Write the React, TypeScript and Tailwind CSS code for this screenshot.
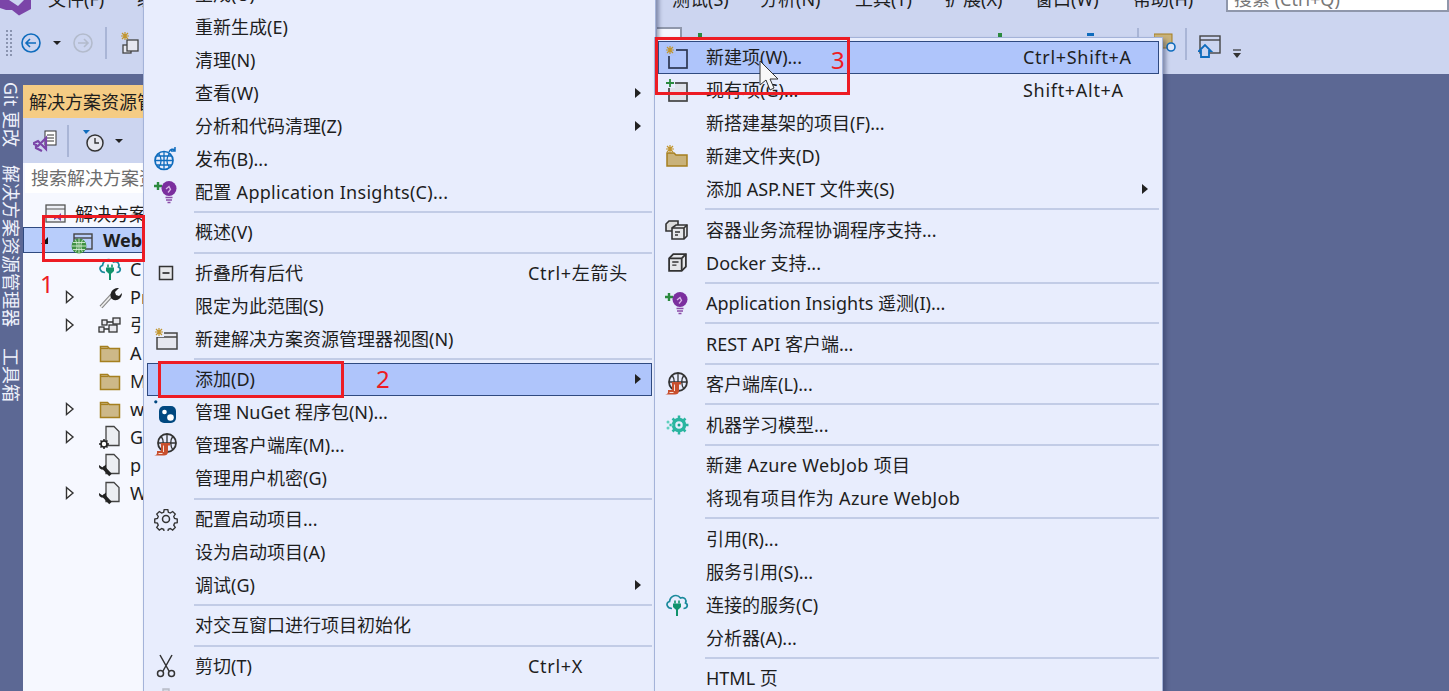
import React from "react";

const Folder = () => (
  <svg width="22" height="20" viewBox="0 0 22 20">
    <path d="M1.500 3.500h7l2 2h10v13h-19z" fill="#cdb888" stroke="#a57f1f" strokeWidth="1.500" />
    <path d="M1.500 5.500h8" stroke="#a57f1f" strokeWidth="1.200" />
  </svg>
);
const Tri = () => (
  <svg width="10" height="14" viewBox="0 0 10 14"><path d="M1.500 1.500 8 7l-6.500 5.500z" fill="#fff" stroke="#333" strokeWidth="1.400" /></svg>
);
const Spark = ({ x = 5, y = 5 }: { x?: number; y?: number }) => (
  <g stroke="#c2962e" strokeWidth="1.200">
    <path d={`M${x - 4} ${y}h8M${x} ${y - 4}v8M${x - 3} ${y - 3}l6 6M${x + 3} ${y - 3}l-6 6`} />
  </g>
);
const Doc = ({ badge }: { badge: "gear" | "wrench" }) => (
  <svg width="22" height="24" viewBox="0 0 22 24">
    <path d="M7 1.500h8l5 5v14H7z" fill="#eceef2" stroke="#444" strokeWidth="1.300" />
    {badge === "gear" ? (
      <g>
        <path d="M5 14v10M0 19h10M1.500 15.500l7 7M8.500 15.500l-7 7" stroke="#222" strokeWidth="1.500" />
        <circle cx="5" cy="19" r="3" fill="#fff" stroke="#222" strokeWidth="1.600" />
      </g>
    ) : (
      <g>
        <path d="M4 14l7.500 8" stroke="#222" strokeWidth="3.500" />
        <path d="M7 11.500 3.500 14.500 0 12c-.5 3 1.500 5 5 4.500L7 15z" fill="#222" />
      </g>
    )}
  </svg>
);
const CloudPlug = ({ size = 24 }: { size?: number }) => (
  <svg width={size} height={size} viewBox="0 0 24 24">
    <path d="M7 15.500C2 15.500 0 10 4.500 8.500 5.500 2.500 12 .5 15.500 5c4-1.500 6.500 2 5 5 3 1.500 2 5.500-2 5.500" fill="none" stroke="#1a8a9c" strokeWidth="1.700" />
    <path d="M10 7.500v3M14 7.500v3" stroke="#11936b" strokeWidth="1.600" />
    <path d="M8 10.500h8v3.500l-2.500 2.500h-3L8 14z" fill="#11936b" />
    <path d="M12 16v7" stroke="#11936b" strokeWidth="2" />
  </svg>
);
const GlobeScript = () => (
  <svg width="24" height="24" viewBox="0 0 24 24">
    <circle cx="13" cy="10" r="9" fill="none" stroke="#333" strokeWidth="1.800" />
    <path d="M4 10h18M13 1v18M7 3c3 4 3 10 0 14M19 3c-3 4-3 10 0 14" fill="none" stroke="#333" strokeWidth="1.300" />
    <path d="M7 10h9v2.500h-2v6c0 3-2 4-4 4H0c2 0 3-1 3-2.500V18h4v-5c0-1.500-.5-3 0-3z" fill="#c8502e" />
    <path d="M9.500 12.500v6.500M4.500 20.500h4" stroke="#f5e0d8" strokeWidth="1" />
  </svg>
);
const Bulb = () => (
  <svg width="24" height="24" viewBox="0 0 24 24">
    <path d="M0 6h8M4 2v8" stroke="#2b8a3e" strokeWidth="2.400" />
    <circle cx="15" cy="8.500" r="7.500" fill="#7b2f9e" />
    <path d="M12 9l3-2.500 1.500 3-2.500 3" fill="none" stroke="#d9b8e8" strokeWidth="1.300" />
    <path d="M11.500 17.500h7M12 20h6M13.500 22.500h3" stroke="#8a4ba8" strokeWidth="1.600" />
  </svg>
);
const Box = () => (
  <svg width="21" height="21" viewBox="0 0 20 20">
    <path d="M2 6l4-4h12v12l-4 4H2z" fill="#e6e7ea" stroke="#333" strokeWidth="1.700" />
    <path d="M2 6h12v12M14 6l4-4" fill="none" stroke="#333" strokeWidth="1.700" />
    <path d="M5 9.500h6M5 12.500h4" stroke="#333" strokeWidth="1.400" />
  </svg>
);
const Boxes = () => (
  <svg width="24" height="22" viewBox="0 0 24 22">
    <path d="M1 5l3-3h9v10H1z" fill="#ddd" stroke="#333" strokeWidth="1.600" />
    <path d="M7 9l4-3h11v11l-3 3H7z" fill="#e6e7ea" stroke="#333" strokeWidth="1.600" />
    <path d="M7 9h12v11M19 9l3-3M10 13h5M10 16h3" fill="none" stroke="#333" strokeWidth="1.600" />
  </svg>
);
const Ml = () => (
  <svg width="24" height="24" viewBox="0 0 24 24">
    <circle cx="14" cy="12" r="5.500" fill="none" stroke="#2ab5a0" strokeWidth="3.500" />
    <path d="M14 2.500v3M14 18.500v3M4.500 12h3M20.500 12h3M7.500 5.500l2 2M20.500 5.500l-2 2M7.500 18.500l2-2M20.500 18.500l-2-2" stroke="#2ab5a0" strokeWidth="2.500" />
    <circle cx="14" cy="12" r="1.500" fill="#14a58e" />
    <circle cx="3" cy="9" r="1.500" fill="#5fd0bd" /><circle cx="3" cy="15" r="1.500" fill="#5fd0bd" /><circle cx="7" cy="12" r="1.300" fill="#5fd0bd" />
  </svg>
);
const Scissors = () => (
  <svg width="20" height="24" viewBox="0 0 20 24" fill="none" stroke="#333" strokeWidth="1.500">
    <path d="M4 1l9 16M16 1L7 17" /><circle cx="4.500" cy="19.500" r="3" /><circle cx="15.500" cy="19.500" r="3" />
  </svg>
);
const Gear = () => (
  <svg width="24" height="24" viewBox="0 0 24 24" fill="none" stroke="#333" strokeWidth="1.500">
    <path d="M10 1.500h4l.6 3 2.200.9 2.600-1.700 2.900 2.900-1.700 2.600.9 2.200 3 .6v4l-3 .6-.9 2.200 1.700 2.600-2.900 2.900-2.600-1.700-2.200.9-.6 3h-4l-.6-3-2.200-.9-2.600 1.700-2.900-2.900 1.700-2.600-.9-2.200-3-.6v-4l3-.6.9-2.200-1.700-2.600 2.900-2.900 2.600 1.700 2.200-.9z" transform="translate(1.200 1.200) scale(.9)" />
    <circle cx="12" cy="12" r="3.500" />
  </svg>
);
const Sq = () => (
  <svg width="16" height="16" viewBox="0 0 16 16" fill="none"><rect x="1.500" y="1.500" width="13" height="13" fill="#e6e7ea" stroke="#333" strokeWidth="1.500" /><path d="M4.500 8h7" stroke="#222" strokeWidth="1.600" /></svg>
);
const GlobeUp = () => (
  <svg width="24" height="24" viewBox="0 0 24 24" fill="none" stroke="#0f6cbd" strokeWidth="1.700">
    <circle cx="10" cy="13.500" r="9" /><path d="M1 13.500h18M10 4.500v18M4.500 6.500c3.500 4 3.500 10 0 14M15.500 6.500c-3.500 4-3.500 10 0 14M2.500 9h15M2.500 18h15" strokeWidth="1.300" />
    <path d="M15 5c1.500-3 4-3.500 6-2M21 0v4h-4" strokeWidth="1.500" />
  </svg>
);
const NuGet = () => (
  <svg width="24" height="24" viewBox="0 0 24 24">
    <rect x="5" y="6" width="17" height="17" rx="5" fill="#004880" />
    <circle cx="1.800" cy="1.800" r="1.600" fill="#004880" />
    <circle cx="10.500" cy="12" r="2.300" fill="#fff" /><circle cx="16.500" cy="17.500" r="3.300" fill="#fff" />
  </svg>
);
const NewSol = () => (
  <svg width="24" height="24" viewBox="0 0 24 24">
    <rect x="3" y="6" width="20" height="16" fill="#e6e7ef" stroke="#444" strokeWidth="1.500" /><path d="M3 10h20" stroke="#444" strokeWidth="1.500" />
    <rect x="0" y="0" width="10" height="10" fill="#e8edfd" />
    <Spark x={5} y={5} />
  </svg>
);
const NewItem = () => (
  <svg width="24" height="24" viewBox="0 0 24 24">
    <rect x="4" y="5" width="18" height="18" fill="none" stroke="#2c3550" strokeWidth="1.700" />
    <rect x="0" y="0" width="11" height="11" fill="#aec3f8" />
    <Spark x={5} y={5} />
  </svg>
);
const AddItem = () => (
  <svg width="24" height="24" viewBox="0 0 24 24">
    <rect x="4" y="5" width="18" height="18" fill="#dfe2ea" stroke="#444" strokeWidth="1.700" />
    <rect x="0" y="0" width="10" height="10" fill="#e8edfd" />
    <path d="M1 5h8M5 1v8" stroke="#2b8a3e" strokeWidth="1.800" />
  </svg>
);
const NewFolder = () => (
  <svg width="24" height="24" viewBox="0 0 24 24">
    <path d="M2 9h7l2 2h11v11H2z" fill="#c9b27a" stroke="#a57f1f" strokeWidth="1.500" />
    <Spark x={5} y={5} />
  </svg>
);
const Web = () => (
  <svg width="16" height="16" viewBox="0 0 16 16" fill="none">
    <circle cx="8" cy="8" r="7.500" fill="#3f9142" />
    <path d="M.5 8h15M8 .5v15M4.500 2c2 3.500 2 8.500 0 12M11.500 2c-2 3.500-2 8.500 0 12M2 4.500h12M2 11.500h12" stroke="#d4ecd4" strokeWidth=".9" />
  </svg>
);
const Paste = () => (
  <svg width="20" height="24" viewBox="0 0 20 24"><path d="M4 6h12v16H4z M7 6V2h6v4" fill="#d5d8e2" stroke="#b8bcc8" strokeWidth="1.400" /></svg>
);

type Row = { t?: string; sep?: boolean; k?: string; a?: boolean; i?: React.ReactNode; hl?: boolean; wide?: boolean };

const menu1: Row[] = [
  { t: "生成(U)" }, { t: "重新生成(E)" }, { t: "清理(N)" }, { t: "查看(W)", a: true }, { t: "分析和代码清理(Z)", a: true },
  { t: "发布(B)...", i: <GlobeUp /> }, { t: "配置 Application Insights(C)...", i: <Bulb />, wide: true }, { sep: true },
  { t: "概述(V)" }, { sep: true },
  { t: "折叠所有后代", k: "Ctrl+左箭头", i: <Sq /> }, { t: "限定为此范围(S)" }, { t: "新建解决方案资源管理器视图(N)", i: <NewSol /> }, { sep: true },
  { t: "添加(D)", a: true, hl: true }, { t: "管理 NuGet 程序包(N)...", i: <NuGet /> }, { t: "管理客户端库(M)...", i: <GlobeScript /> }, { t: "管理用户机密(G)" }, { sep: true },
  { t: "配置启动项目...", i: <Gear /> }, { t: "设为启动项目(A)" }, { t: "调试(G)", a: true }, { sep: true },
  { t: "对交互窗口进行项目初始化" }, { sep: true },
  { t: "剪切(T)", k: "Ctrl+X", i: <Scissors /> }, { i: <Paste /> },
];
const menu2: Row[] = [
  { t: "新建项(W)...", k: "Ctrl+Shift+A", i: <NewItem />, hl: true }, { t: "现有项(G)...", k: "Shift+Alt+A", i: <AddItem /> }, { t: "新搭建基架的项目(F)..." },
  { t: "新建文件夹(D)", i: <NewFolder /> }, { t: "添加 ASP.NET 文件夹(S)", a: true }, { sep: true },
  { t: "容器业务流程协调程序支持...", i: <Boxes /> }, { t: "Docker 支持...", i: <Box /> }, { sep: true },
  { t: "Application Insights 遥测(I)...", i: <Bulb /> }, { sep: true },
  { t: "REST API 客户端..." }, { sep: true },
  { t: "客户端库(L)...", i: <GlobeScript /> }, { sep: true },
  { t: "机器学习模型...", i: <Ml /> }, { sep: true },
  { t: "新建 Azure WebJob 项目", wide: true }, { t: "将现有项目作为 Azure WebJob", wide: true }, { sep: true },
  { t: "引用(R)..." }, { t: "服务引用(S)..." }, { t: "连接的服务(C)", i: <CloudPlug /> }, { t: "分析器(A)..." }, { sep: true },
  { t: "HTML 页" },
];

function Menu({ rows, cls, keyCol }: { rows: Row[]; cls: string; keyCol: string }) {
  return (
    <div className={`absolute z-10 bg-[#e8edfd] border border-[#a4b3d9] px-[3px] py-[3px] shadow-[3px_3px_4px_rgba(40,50,90,0.45)] ${cls}`}>
      {rows.map((r, n) =>
        r.sep ? (
          <div key={n} className="h-[7.500px] flex items-center pl-[47px]"><div className="h-[2px] w-full bg-[#c2cce6]" /></div>
        ) : (
          <div key={n} className={`relative h-[33px] flex items-center border ${r.hl ? "bg-[#afc5fb] border-[#2f4a80]" : "border-transparent"}`}>
            <div className="w-[47px] shrink-0 flex items-center">
              <div className="w-[36px] flex justify-center items-center">{r.i}</div>
            </div>
            <div className={`flex-1 whitespace-nowrap ${r.wide ? "tracking-[0.3px]" : ""}`}>{r.t}</div>
            {r.k && <div className={`absolute whitespace-nowrap tracking-[0.7px] ${keyCol}`}>{r.k}</div>}
            {r.a && <div className="absolute right-[10px] w-0 h-0 border-y-[5px] border-y-transparent border-l-[6px] border-l-[#222]" />}
          </div>
        )
      )}
    </div>
  );
}

const tree: { t: string; tri?: boolean; i: React.ReactNode }[] = [
  { t: "C", i: <CloudPlug /> },
  { t: "Pr", tri: true, i: <svg width="24" height="24" viewBox="0 0 24 24"><path d="M3 22 14 10" stroke="#888" strokeWidth="4" /><path d="M3 22 14 10" stroke="#eee" strokeWidth="1.800" /><path d="M13 13c-2-5 2-11 8-10l-4 4 1 3 3 1 3-3c0 6-6 9-10 6z" fill="#222" /></svg> },
  { t: "引", tri: true, i: <svg width="24" height="16" viewBox="0 0 24 16" fill="#e9e9ee" stroke="#333" strokeWidth="1.300"><rect x="4" y="3" width="5" height="5" /><rect x="15" y="1" width="7" height="6" /><rect x="1" y="10" width="5" height="5" /><rect x="11" y="8" width="8" height="7" /><path d="M6 12h5M9 5h6" /></svg> },
  { t: "A", i: <Folder /> },
  { t: "M", i: <Folder /> },
  { t: "w", tri: true, i: <Folder /> },
  { t: "G", tri: true, i: <Doc badge="gear" /> },
  { t: "p", i: <Doc badge="wrench" /> },
  { t: "W", tri: true, i: <Doc badge="wrench" /> },
];

export default function App() {
  return (
    <div className="relative w-[1449px] h-[691px] overflow-hidden bg-[#5c6894] text-[18px] leading-[24px] text-[#1e1e1e] font-['Noto_Sans','Noto_Sans_CJK_SC',sans-serif]">
      <div className="h-[74px] bg-[#ccd5f0]">
        <div className="h-[25px] relative overflow-hidden">
          <svg width="31" height="16" viewBox="0 0 31 16" className="absolute left-0 top-0"><path d="M0 0h9l9 6 6-6h7v9l-12 6.500L12 10l-6 0-6-2z" fill="#7b45a8" /></svg>
          <div className="flex items-start -mt-[13px] ml-[48px] whitespace-nowrap">
            <span className="w-[89px] shrink-0">文件(F)</span>
            <span className="w-[535px] shrink-0">编辑(E)</span>
            <span className="w-[88px] shrink-0">测试(S)</span>
            <span className="w-[95px] shrink-0">分析(N)</span>
            <span className="w-[90px] shrink-0">工具(T)</span>
            <span className="w-[90px] shrink-0">扩展(X)</span>
            <span className="w-[98px] shrink-0">窗口(W)</span>
            <span className="w-[93px] shrink-0">帮助(H)</span>
            <span className="w-[223px] shrink-0 h-[25px] bg-white border-[2px] border-[#8f97ab] pl-[6px] text-[#777] leading-[20px]">搜索 (Ctrl+Q)</span>
          </div>
        </div>
        <div className="h-[36px] flex items-center pl-[5px]">
          <div className="w-[9px] h-[28px] bg-[radial-gradient(#8a94b0_1px,transparent_1.500px)] bg-[length:4px_4px]" />
          <svg className="ml-[7px]" width="20" height="20" viewBox="0 0 20 20" fill="none" stroke="#0f6cbd" strokeWidth="1.600"><circle cx="10" cy="10" r="9" /><path d="M15 10H5M9 6l-4 4 4 4" /></svg>
          <div className="ml-[12px] w-0 h-0 border-x-[4px] border-x-transparent border-t-[4px] border-t-[#222]" />
          <svg className="ml-[12px]" width="20" height="20" viewBox="0 0 20 20" fill="none" stroke="#b3bbcc" strokeWidth="1.600"><circle cx="10" cy="10" r="9" /><path d="M5 10h10M11 6l4 4-4 4" /></svg>
          <div className="ml-[12px] w-[2px] h-[32px] bg-[#a9b5d6]" />
          <svg className="ml-[13px]" width="20" height="24" viewBox="0 0 20 24" fill="#e6e7ef" stroke="#444" strokeWidth="1.300"><rect x="3" y="14" width="8" height="8" /><rect x="7" y="9" width="11" height="11" /><Spark x={5} y={5} /></svg>
          <div className="ml-auto flex items-center mr-[273px]">
            <svg width="22" height="24" viewBox="0 0 22 24"><rect x="0" y="3" width="18" height="14" fill="#c9b27a" stroke="#a57f1f" /><circle cx="17" cy="16" r="4" fill="#e0e8fa" stroke="#0f6cbd" strokeWidth="1.600" /></svg>
          </div>
        </div>
      </div>
      <div className="absolute left-[1185px] top-[28px] w-[2px] h-[32px] bg-[#a9b5d6]" />
      <svg className="absolute left-[1198px] top-[34px]" width="24" height="24" viewBox="0 0 24 24"><rect x="2" y="2" width="20" height="17" fill="none" stroke="#444" strokeWidth="1.400" /><path d="M2 6h20" stroke="#444" strokeWidth="1.400" /><path d="M1 17l6-6 6 6h-2v6H3v-6z" fill="#ccd5f0" stroke="#0f6cbd" strokeWidth="1.800" /></svg>
      <svg className="absolute left-[1232px] top-[49px]" width="10" height="10" viewBox="0 0 10 10"><path d="M1 1h8" stroke="#333" strokeWidth="1.200" /><path d="M1 4h8L5 9z" fill="#333" /></svg>
      <div className="absolute left-[657px] top-[27px] w-[25px] h-[12px] bg-[#f4f6fe] border-t-2 border-r-2 border-[#8f97ab]" />
      <div className="absolute left-[698px] top-[33px] w-[4px] h-[4px] bg-[#2b8a3e]" />
      <div className="absolute left-[998px] top-[33px] w-[4px] h-[4px] bg-[#2b8a3e]" />
      <div className="absolute left-[1087px] top-[33px] w-[7px] h-[3px] bg-[#0f6cbd]" />
      <div className="absolute left-[1137px] top-[28px] w-[2px] h-[10px] bg-[#a9b5d6]" />

      <div className="flex h-[617px]">
        <div className="w-[23px] relative text-[#eef1fb] text-[18px]">
          <div className="absolute left-0 top-[8px] w-[23px] [writing-mode:vertical-rl] [text-orientation:sideways] whitespace-nowrap">Git 更改</div>
          <div className="absolute left-0 top-[91px] w-[23px] [writing-mode:vertical-rl] [text-orientation:sideways] whitespace-nowrap">解决方案资源管理器</div>
          <div className="absolute left-0 top-[274px] w-[23px] [writing-mode:vertical-rl] [text-orientation:sideways] whitespace-nowrap">工具箱</div>
        </div>
        <div className="w-[122px] mt-[11px] flex flex-col overflow-hidden bg-[#f6f8ff]">
          <div className="h-[33px] shrink-0 bg-[#f5cc84] flex items-center pl-[6px] whitespace-nowrap">解决方案资源管理器</div>
          <div className="h-[45px] shrink-0 bg-[#ccd5f0] flex items-center pl-[10px]">
            <svg width="24" height="24" viewBox="0 0 24 24"><rect x="12" y="2" width="11" height="14" fill="#fff" stroke="#333" /><path d="M14 6h7M14 9h7M14 12h7" stroke="#333" /><path d="M1 14l4-2 8 8V9L5 17 1 15z M3 15v4l6 3" fill="none" stroke="#7b45a8" strokeWidth="2.200" /></svg>
            <div className="ml-[10px] w-[2px] h-[32px] bg-[#a9b5d6]" />
            <svg className="ml-[13px]" width="24" height="24" viewBox="0 0 24 24"><path d="M1 1h7L4 5z" fill="#0f6cbd" /><circle cx="13" cy="14" r="8" fill="#e6e7ef" stroke="#333" strokeWidth="1.500" /><path d="M13 9v5h4" stroke="#333" strokeWidth="1.400" fill="none" /></svg>
            <div className="ml-[9px] w-0 h-0 border-x-[4px] border-x-transparent border-t-[4px] border-t-[#222]" />
          </div>
          <div className="h-[30px] shrink-0 mx-[2px] bg-white flex items-center pl-[6px] whitespace-nowrap text-[#6d6d6d]">搜索解决方案资源管理器</div>
          <div className="h-[21px] shrink-0 mt-[10px] flex items-center pl-[22px] whitespace-nowrap">
            <svg className="shrink-0" width="22" height="20" viewBox="0 0 22 20"><rect x="1" y="1" width="19" height="17" fill="#eef0f6" stroke="#555" strokeWidth="1.300" /><path d="M1 5h19" stroke="#555" /><path d="M9 11l3 2 4-4v8l-4-3-3 2z" fill="#7b45a8" /></svg>
            <span className="ml-[8px]">解决方案</span>
          </div>
          <div className="h-[26px] shrink-0 mt-[3px] mb-[2px] bg-[#b8cdfb] border border-[#2f4a80] flex items-center whitespace-nowrap font-bold">
            <div className="ml-[17px] w-0 h-0 border-t-[7px] border-t-transparent border-r-[7px] border-r-[#111]" />
            <div className="ml-[20px] relative w-[24px] h-[24px] shrink-0">
              <svg className="absolute left-[5px] top-[5px]" width="20" height="18" viewBox="0 0 20 18" fill="none" stroke="#444" strokeWidth="1.400"><rect x="1" y="1" width="18" height="15" /><path d="M1 5h18" /></svg>
              <div className="absolute left-[3px] top-[10px]"><Web /></div>
            </div>
            <span className="ml-[11px]">Web</span>
          </div>
          {tree.map((r) => (
            <div key={r.t} className="h-[28px] flex items-center whitespace-nowrap shrink-0">
              <div className="w-[43px] pl-[42px] shrink-0">{r.tri && <Tri />}</div>
              <div className="w-[24px] ml-[32px] flex justify-center shrink-0">{r.i}</div>
              <span className="ml-[8px]">{r.t}</span>
            </div>
          ))}
        </div>
      </div>

      <Menu rows={menu1} cls="left-[143px] -top-[26.750px] w-[513px] h-[760px]" keyCol="left-[380px]" />
      <Menu rows={menu2} cls="left-[654px] top-[36.500px] w-[509px] h-[700px]" keyCol="left-[364px]" />

      <div className="absolute z-20 left-[42px] top-[215px] w-[103px] h-[47px] border-[3px] border-[#ed1c24]" />
      <div className="absolute z-20 left-[158px] top-[361px] w-[186px] h-[37px] border-[3px] border-[#ed1c24]" />
      <div className="absolute z-20 left-[655px] top-[37px] w-[195px] h-[58px] border-[3px] border-[#ed1c24]" />
      <div className="absolute z-20 left-[40px] top-[270px] text-[24px] leading-[28px] text-[#ed1c24]">1</div>
      <div className="absolute z-20 left-[376px] top-[365px] text-[24px] leading-[28px] text-[#ed1c24]">2</div>
      <div className="absolute z-20 left-[831px] top-[46px] text-[24px] leading-[28px] text-[#ed1c24]">3</div>
      <svg className="absolute z-20 left-[759px] top-[60px]" width="20" height="32" viewBox="0 0 20 32"><path d="M1 1v24l6-5 4 10 4-2-4-9h8z" fill="#f8f8f8" stroke="#333" strokeWidth="1" /></svg>
    </div>
  );
}
